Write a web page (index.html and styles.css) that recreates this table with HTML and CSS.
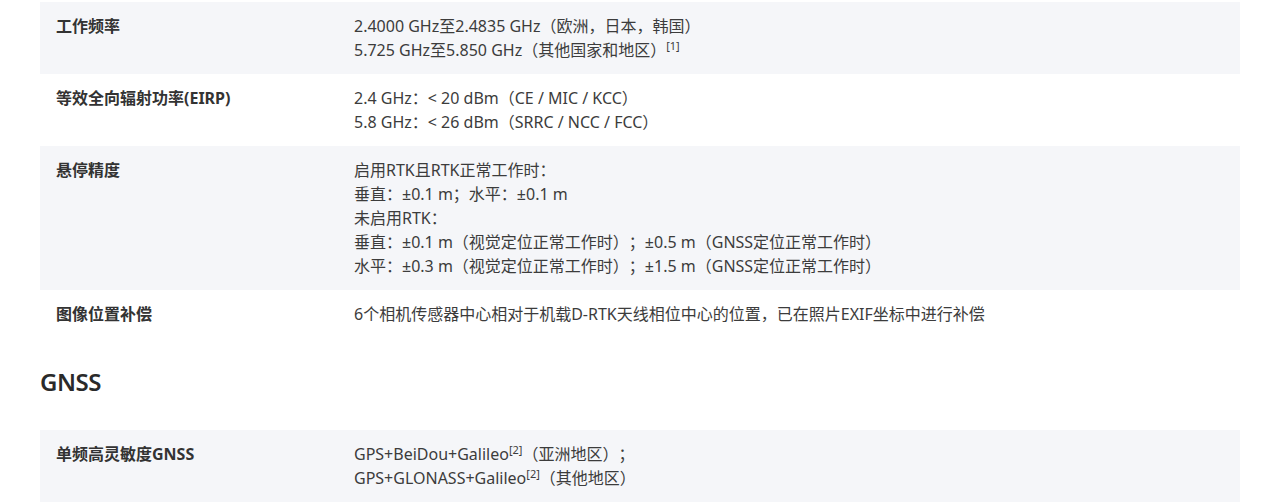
FILE: index.html
```html
<!DOCTYPE html>
<html lang="zh-CN">
  <head>
    <meta charset="UTF-8" />
    <meta name="viewport" content="width=device-width, initial-scale=1.0" />
    <title>规格参数</title>
    <link rel="stylesheet" href="styles.css">
  </head>
  <body>
    <div class="specs">
      <div class="spec-list">
        <div class="spec-row">
          <div class="spec-name">工作频率</div>
          <div class="spec-value">
            <p>2.4000 GHz至2.4835 GHz（欧洲，日本，韩国）</p>
            <p>5.725 GHz至5.850 GHz（其他国家和地区）<sup>[1]</sup></p>
          </div>
        </div>
        <div class="spec-row">
          <div class="spec-name">等效全向辐射功率(EIRP)</div>
          <div class="spec-value">
            <p>2.4 GHz：&lt; 20 dBm（CE / MIC / KCC）</p>
            <p>5.8 GHz：&lt; 26 dBm（SRRC / NCC / FCC）</p>
          </div>
        </div>
        <div class="spec-row">
          <div class="spec-name">悬停精度</div>
          <div class="spec-value">
            <p>启用RTK且RTK正常工作时：</p>
            <p>垂直：±0.1 m；水平：±0.1 m</p>
            <p>未启用RTK：</p>
            <p>垂直：±0.1 m（视觉定位正常工作时）；±0.5 m（GNSS定位正常工作时）</p>
            <p>水平：±0.3 m（视觉定位正常工作时）；±1.5 m（GNSS定位正常工作时）</p>
          </div>
        </div>
        <div class="spec-row">
          <div class="spec-name">图像位置补偿</div>
          <div class="spec-value">
            <p>6个相机传感器中心相对于机载D-RTK天线相位中心的位置，已在照片EXIF坐标中进行补偿</p>
          </div>
        </div>
      </div>

      <h2 class="spec-title">GNSS</h2>
      <div class="spec-list">
        <div class="spec-row">
          <div class="spec-name">单频高灵敏度GNSS</div>
          <div class="spec-value">
            <p>GPS+BeiDou+Galileo<sup>[2]</sup>（亚洲地区）；</p>
            <p>GPS+GLONASS+Galileo<sup>[2]</sup>（其他地区）</p>
          </div>
        </div>
      </div>
    </div>
  </body>
</html>
```
FILE: styles.css
```css
* {
  box-sizing: border-box;
  margin: 0;
  padding: 0;
}
body {
  background-color: #fff;
  font-family: "Noto Sans", "Noto Sans CJK SC", sans-serif;
  color: #3c3c3c;
  text-spacing-trim: space-all;
}
.specs {
  width: 1200px;
  margin: 2px 40px 0;
}
.spec-row {
  display: grid;
  grid-template-columns: 298px 1fr;
  padding: 12px 16px;
  font-size: 16px;
  line-height: 24px;
}
.spec-row:nth-child(odd) {
  background-color: #f5f6f9;
}
.spec-name {
  font-weight: 700;
  color: #333;
}
.spec-value sup {
  font-size: 11px;
  line-height: 0;
  vertical-align: 6px;
}
.spec-title {
  font-size: 24px;
  font-weight: 600;
  line-height: 32px;
  letter-spacing: -0.5px;
  color: #2a2a2a;
  margin: 28px 0 32px;
}
```
